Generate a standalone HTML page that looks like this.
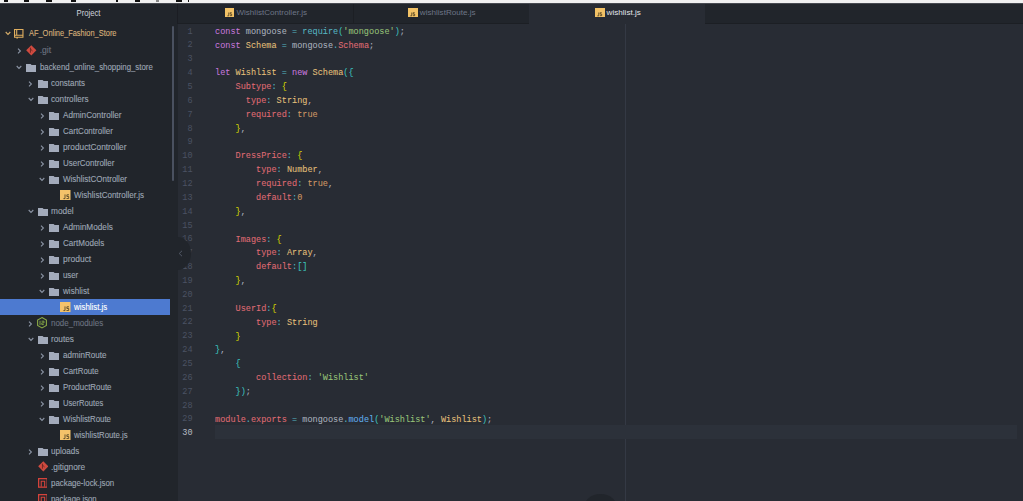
<!DOCTYPE html>
<html><head><meta charset="utf-8"><style>
*{margin:0;padding:0;box-sizing:border-box}
html,body{width:1023px;height:501px;overflow:hidden;background:#21252b}
body{position:relative;font-family:"Liberation Sans",sans-serif}
#strip{position:absolute;left:0;top:0;width:1023px;height:3px;background:#f0f0f0}
.mk{position:absolute;top:0;height:1.6px;background:#111}
#tree{position:absolute;left:0;top:3px;width:177px;height:498px;background:#21252b;overflow:hidden}
#treeinner{position:absolute;left:0;top:-3px;width:177px;height:501px}
.ic{position:absolute;display:block}
.t{position:absolute;white-space:nowrap;font-size:8.6px;line-height:13px;color:#9da5b4;-webkit-text-stroke:0.12px;transform:scaleX(0.93);transform-origin:0 50%}
.t.root{color:#d8b07a;transform:scaleX(0.86)}
.t.dim{color:#6b7280}
.t.selt{color:#ffffff}
.sel{position:absolute;left:0;width:170px;height:16px;background:#4d7ad0}
#proj{position:absolute;left:0;top:9.0px;width:177px;text-align:center;font-size:8.2px;line-height:9px;color:#d0d4db;transform:scaleX(0.94)}
#tscroll{position:absolute;left:172px;top:26px;width:2.2px;height:155px;background:#4a5160;border-radius:1px}
#tabs{position:absolute;left:177px;top:3px;width:846px;height:20.5px;background:#21252b;border-bottom:1px solid #1c1f24}
.tab{position:absolute;top:0;height:20.5px;width:176px;padding-left:2px;text-align:center;font-size:8.1px;line-height:20px;color:#6e7687}
.tab.act{background:#282c34;color:#e2e5ea;height:21px}
.tab .js{display:inline-block;width:9.4px;height:9px;background:#f2c266;vertical-align:-1.5px;margin-right:2px;position:relative}
.tab .js svg{position:absolute;left:0;top:0}
.sep{position:absolute;top:0;width:1px;height:20.5px;background:#1c1f24}
#editor{position:absolute;left:178px;top:23.5px;width:845px;height:477.5px;background:#282c34;overflow:hidden}
.ln{position:absolute;left:0;width:15.5px;text-align:right;font-family:"Liberation Mono",monospace;font-size:9.8px;line-height:13.83px;color:#4b5263;transform:scaleX(0.87);transform-origin:100% 50%}
.ln.cur{color:#b9bdc5}
#cursorline{position:absolute;left:37.2px;width:801.5px;height:13.83px;background:#2c313a}
#code{position:absolute;left:0;top:0}
.cl{position:absolute;left:38.0px;white-space:pre;font-family:"Liberation Mono",monospace;font-size:9.9px;line-height:13.83px;transform:scaleX(0.866);transform-origin:0 50%;-webkit-text-stroke:0.05px}
#wrap{position:absolute;left:447px;top:0;width:1px;height:478px;background:#343944}
#rstrip{position:absolute;left:840.5px;top:0;width:5.5px;height:478px;background:#262a31}
#dock{position:absolute;left:584px;top:494px;width:32.5px;height:27px;border-radius:50%;background:#21252b}
#ldock{position:absolute;left:177px;top:237px;width:13.5px;height:32.5px;border-radius:0 100% 100% 0/0 50% 50% 0;background:#21252b}
</style></head><body>
<div id="strip"><div class="mk" style="left:3.8px;width:4.500000000000001px"></div><div class="mk" style="left:24px;width:5px"></div><div class="mk" style="left:46px;width:5.5px"></div><div class="mk" style="left:71px;width:5px"></div><div class="mk" style="left:116px;width:2px"></div><div class="mk" style="left:135px;width:5px"></div><div class="mk" style="left:176px;width:6px"></div><div class="mk" style="left:188px;width:1px"></div><div class="mk" style="left:156px;width:2.5px;background:#888"></div></div>
<div style="position:absolute;left:0;top:3px;width:1023px;height:1px;background:#474a51;z-index:5"></div>
<div id="tree"><div id="treeinner">
<div id="proj">Project</div>
<svg class="ic" style="left:4.5px;top:31.2px" width="6" height="5" viewBox="0 0 6 5"><polyline points="0.7,1 3,3.4 5.3,1" fill="none" stroke="#d6ad6a" stroke-width="1.1"/></svg><svg class="ic" style="left:14px;top:28.5px" width="9.5" height="10" viewBox="0 0 9.5 10"><path d="M0.55,0.55 H8.95 V8.2 H0.55 Z M2.7,0.55 V6.2 M0.55,6.2 H8.95" fill="none" stroke="#dfae5f" stroke-width="1.1"/><path d="M2.4,8.2 V9.8 L3.2,9.2 L4,9.8 V8.2 Z" fill="#dfae5f"/></svg><div class="t root" style="left:29px;top:27.1px;transform:scaleX(0.864)">AF_Online_Fashion_Store</div><svg class="ic" style="left:16.8px;top:47.7px" width="5" height="6" viewBox="0 0 5 6"><polyline points="1,0.7 3.4,3 1,5.3" fill="none" stroke="#8b94a4" stroke-width="1.1"/></svg><svg class="ic" style="left:26.1px;top:45.4px" width="10.6" height="10.6" viewBox="0 0 11 11"><path d="M5.5,0.2 L10.8,5.5 L5.5,10.8 L0.2,5.5 Z" fill="#cf4a3f"/><path d="M4.6,2.8 V8 M4.6,4.2 L6.8,6.2" stroke="#5a1f1b" stroke-width="0.8" fill="none"/></svg><div class="t dim" style="left:39.7px;top:44.2px;transform:scaleX(1.0)">.git</div><svg class="ic" style="left:16.2px;top:64.9px" width="6" height="5" viewBox="0 0 6 5"><polyline points="0.7,1 3,3.4 5.3,1" fill="none" stroke="#8b94a4" stroke-width="1.1"/></svg><svg class="ic" style="left:26.3px;top:63.5px" width="10" height="8" viewBox="0 0 10 8"><path d="M0,0 H4.6 L5.6,1 H10 V8 H0 Z" fill="#a3abbb"/></svg><div class="t" style="left:39.7px;top:61.0px;transform:scaleX(0.911)">backend_online_shopping_store</div><svg class="ic" style="left:28.3px;top:80.5px" width="5" height="6" viewBox="0 0 5 6"><polyline points="1,0.7 3.4,3 1,5.3" fill="none" stroke="#8b94a4" stroke-width="1.1"/></svg><svg class="ic" style="left:37.8px;top:79.5px" width="10" height="8" viewBox="0 0 10 8"><path d="M0,0 H4.6 L5.6,1 H10 V8 H0 Z" fill="#a3abbb"/></svg><div class="t" style="left:51.2px;top:77.0px;transform:scaleX(0.924)">constants</div><svg class="ic" style="left:27.7px;top:96.9px" width="6" height="5" viewBox="0 0 6 5"><polyline points="0.7,1 3,3.4 5.3,1" fill="none" stroke="#8b94a4" stroke-width="1.1"/></svg><svg class="ic" style="left:37.8px;top:95.5px" width="10" height="8" viewBox="0 0 10 8"><path d="M0,0 H4.6 L5.6,1 H10 V8 H0 Z" fill="#a3abbb"/></svg><div class="t" style="left:51.2px;top:93.0px;transform:scaleX(0.948)">controllers</div><svg class="ic" style="left:39.8px;top:112.5px" width="5" height="6" viewBox="0 0 5 6"><polyline points="1,0.7 3.4,3 1,5.3" fill="none" stroke="#8b94a4" stroke-width="1.1"/></svg><svg class="ic" style="left:49.3px;top:111.5px" width="10" height="8" viewBox="0 0 10 8"><path d="M0,0 H4.6 L5.6,1 H10 V8 H0 Z" fill="#a3abbb"/></svg><div class="t" style="left:62.7px;top:109.0px;transform:scaleX(0.951)">AdminController</div><svg class="ic" style="left:39.8px;top:128.5px" width="5" height="6" viewBox="0 0 5 6"><polyline points="1,0.7 3.4,3 1,5.3" fill="none" stroke="#8b94a4" stroke-width="1.1"/></svg><svg class="ic" style="left:49.3px;top:127.5px" width="10" height="8" viewBox="0 0 10 8"><path d="M0,0 H4.6 L5.6,1 H10 V8 H0 Z" fill="#a3abbb"/></svg><div class="t" style="left:62.7px;top:125.0px;transform:scaleX(0.931)">CartController</div><svg class="ic" style="left:39.8px;top:144.5px" width="5" height="6" viewBox="0 0 5 6"><polyline points="1,0.7 3.4,3 1,5.3" fill="none" stroke="#8b94a4" stroke-width="1.1"/></svg><svg class="ic" style="left:49.3px;top:143.5px" width="10" height="8" viewBox="0 0 10 8"><path d="M0,0 H4.6 L5.6,1 H10 V8 H0 Z" fill="#a3abbb"/></svg><div class="t" style="left:62.7px;top:141.0px;transform:scaleX(0.962)">productController</div><svg class="ic" style="left:39.8px;top:160.5px" width="5" height="6" viewBox="0 0 5 6"><polyline points="1,0.7 3.4,3 1,5.3" fill="none" stroke="#8b94a4" stroke-width="1.1"/></svg><svg class="ic" style="left:49.3px;top:159.5px" width="10" height="8" viewBox="0 0 10 8"><path d="M0,0 H4.6 L5.6,1 H10 V8 H0 Z" fill="#a3abbb"/></svg><div class="t" style="left:62.7px;top:157.0px;transform:scaleX(0.929)">UserController</div><svg class="ic" style="left:39.2px;top:176.9px" width="6" height="5" viewBox="0 0 6 5"><polyline points="0.7,1 3,3.4 5.3,1" fill="none" stroke="#8b94a4" stroke-width="1.1"/></svg><svg class="ic" style="left:49.3px;top:175.5px" width="10" height="8" viewBox="0 0 10 8"><path d="M0,0 H4.6 L5.6,1 H10 V8 H0 Z" fill="#a3abbb"/></svg><div class="t" style="left:62.7px;top:173.0px;transform:scaleX(0.931)">WishlistCOntroller</div><svg class="ic" style="left:60.4px;top:189.6px" width="10.5" height="10" viewBox="0 0 10.5 10"><rect width="10.5" height="10" fill="#f4c26a"/><path d="M3.4,8.6 H5 V4.4 M9,4.8 H6.9 V6.5 H8.7 V8.5 H6.5" fill="none" stroke="#4a3d22" stroke-width="0.8"/></svg><div class="t" style="left:74.2px;top:189.0px;transform:scaleX(0.934)">WishlistController.js</div><svg class="ic" style="left:27.7px;top:208.9px" width="6" height="5" viewBox="0 0 6 5"><polyline points="0.7,1 3,3.4 5.3,1" fill="none" stroke="#8b94a4" stroke-width="1.1"/></svg><svg class="ic" style="left:37.8px;top:207.5px" width="10" height="8" viewBox="0 0 10 8"><path d="M0,0 H4.6 L5.6,1 H10 V8 H0 Z" fill="#a3abbb"/></svg><div class="t" style="left:51.2px;top:205.0px;transform:scaleX(0.966)">model</div><svg class="ic" style="left:39.8px;top:224.5px" width="5" height="6" viewBox="0 0 5 6"><polyline points="1,0.7 3.4,3 1,5.3" fill="none" stroke="#8b94a4" stroke-width="1.1"/></svg><svg class="ic" style="left:49.3px;top:223.5px" width="10" height="8" viewBox="0 0 10 8"><path d="M0,0 H4.6 L5.6,1 H10 V8 H0 Z" fill="#a3abbb"/></svg><div class="t" style="left:62.7px;top:221.0px;transform:scaleX(0.957)">AdminModels</div><svg class="ic" style="left:39.8px;top:240.5px" width="5" height="6" viewBox="0 0 5 6"><polyline points="1,0.7 3.4,3 1,5.3" fill="none" stroke="#8b94a4" stroke-width="1.1"/></svg><svg class="ic" style="left:49.3px;top:239.5px" width="10" height="8" viewBox="0 0 10 8"><path d="M0,0 H4.6 L5.6,1 H10 V8 H0 Z" fill="#a3abbb"/></svg><div class="t" style="left:62.7px;top:237.0px;transform:scaleX(0.937)">CartModels</div><svg class="ic" style="left:39.8px;top:256.5px" width="5" height="6" viewBox="0 0 5 6"><polyline points="1,0.7 3.4,3 1,5.3" fill="none" stroke="#8b94a4" stroke-width="1.1"/></svg><svg class="ic" style="left:49.3px;top:255.5px" width="10" height="8" viewBox="0 0 10 8"><path d="M0,0 H4.6 L5.6,1 H10 V8 H0 Z" fill="#a3abbb"/></svg><div class="t" style="left:62.7px;top:253.0px;transform:scaleX(0.984)">product</div><svg class="ic" style="left:39.8px;top:272.5px" width="5" height="6" viewBox="0 0 5 6"><polyline points="1,0.7 3.4,3 1,5.3" fill="none" stroke="#8b94a4" stroke-width="1.1"/></svg><svg class="ic" style="left:49.3px;top:271.5px" width="10" height="8" viewBox="0 0 10 8"><path d="M0,0 H4.6 L5.6,1 H10 V8 H0 Z" fill="#a3abbb"/></svg><div class="t" style="left:62.7px;top:269.0px;transform:scaleX(0.909)">user</div><svg class="ic" style="left:39.2px;top:288.9px" width="6" height="5" viewBox="0 0 6 5"><polyline points="0.7,1 3,3.4 5.3,1" fill="none" stroke="#8b94a4" stroke-width="1.1"/></svg><svg class="ic" style="left:49.3px;top:287.5px" width="10" height="8" viewBox="0 0 10 8"><path d="M0,0 H4.6 L5.6,1 H10 V8 H0 Z" fill="#a3abbb"/></svg><div class="t" style="left:62.7px;top:285.0px;transform:scaleX(0.946)">wishlist</div><div class="sel" style="top:299.0px"></div><svg class="ic" style="left:60.4px;top:301.6px" width="10.5" height="10" viewBox="0 0 10.5 10"><rect width="10.5" height="10" fill="#f4c26a"/><path d="M3.4,8.6 H5 V4.4 M9,4.8 H6.9 V6.5 H8.7 V8.5 H6.5" fill="none" stroke="#4a3d22" stroke-width="0.8"/></svg><div class="t selt" style="left:74.2px;top:301.0px;transform:scaleX(0.917)">wishlist.js</div><svg class="ic" style="left:28.3px;top:320.5px" width="5" height="6" viewBox="0 0 5 6"><polyline points="1,0.7 3.4,3 1,5.3" fill="none" stroke="#8b94a4" stroke-width="1.1"/></svg><svg class="ic" style="left:37.4px;top:317.2px" width="10" height="11.5" viewBox="0 0 10 11.5"><path d="M5,0.6 L9.4,3.1 V8.4 L5,10.9 L0.6,8.4 V3.1 Z" fill="none" stroke="#89a845" stroke-width="1.1"/><path d="M3,3.8 V8 M4.6,4.2 H7 V5.9 H4.8 V7.6 H6.8" fill="none" stroke="#7f9f45" stroke-width="1"/></svg><div class="t dim" style="left:51.2px;top:317.0px;transform:scaleX(0.926)">node_modules</div><svg class="ic" style="left:27.7px;top:336.9px" width="6" height="5" viewBox="0 0 6 5"><polyline points="0.7,1 3,3.4 5.3,1" fill="none" stroke="#8b94a4" stroke-width="1.1"/></svg><svg class="ic" style="left:37.8px;top:335.5px" width="10" height="8" viewBox="0 0 10 8"><path d="M0,0 H4.6 L5.6,1 H10 V8 H0 Z" fill="#a3abbb"/></svg><div class="t" style="left:51.2px;top:333.0px;transform:scaleX(0.959)">routes</div><svg class="ic" style="left:39.8px;top:352.5px" width="5" height="6" viewBox="0 0 5 6"><polyline points="1,0.7 3.4,3 1,5.3" fill="none" stroke="#8b94a4" stroke-width="1.1"/></svg><svg class="ic" style="left:49.3px;top:351.5px" width="10" height="8" viewBox="0 0 10 8"><path d="M0,0 H4.6 L5.6,1 H10 V8 H0 Z" fill="#a3abbb"/></svg><div class="t" style="left:62.7px;top:349.0px;transform:scaleX(0.936)">adminRoute</div><svg class="ic" style="left:39.8px;top:368.5px" width="5" height="6" viewBox="0 0 5 6"><polyline points="1,0.7 3.4,3 1,5.3" fill="none" stroke="#8b94a4" stroke-width="1.1"/></svg><svg class="ic" style="left:49.3px;top:367.5px" width="10" height="8" viewBox="0 0 10 8"><path d="M0,0 H4.6 L5.6,1 H10 V8 H0 Z" fill="#a3abbb"/></svg><div class="t" style="left:62.7px;top:365.0px;transform:scaleX(0.909)">CartRoute</div><svg class="ic" style="left:39.8px;top:384.5px" width="5" height="6" viewBox="0 0 5 6"><polyline points="1,0.7 3.4,3 1,5.3" fill="none" stroke="#8b94a4" stroke-width="1.1"/></svg><svg class="ic" style="left:49.3px;top:383.5px" width="10" height="8" viewBox="0 0 10 8"><path d="M0,0 H4.6 L5.6,1 H10 V8 H0 Z" fill="#a3abbb"/></svg><div class="t" style="left:62.7px;top:381.0px;transform:scaleX(0.923)">ProductRoute</div><svg class="ic" style="left:39.8px;top:400.5px" width="5" height="6" viewBox="0 0 5 6"><polyline points="1,0.7 3.4,3 1,5.3" fill="none" stroke="#8b94a4" stroke-width="1.1"/></svg><svg class="ic" style="left:49.3px;top:399.5px" width="10" height="8" viewBox="0 0 10 8"><path d="M0,0 H4.6 L5.6,1 H10 V8 H0 Z" fill="#a3abbb"/></svg><div class="t" style="left:62.7px;top:397.0px;transform:scaleX(0.886)">UserRoutes</div><svg class="ic" style="left:39.2px;top:416.9px" width="6" height="5" viewBox="0 0 6 5"><polyline points="0.7,1 3,3.4 5.3,1" fill="none" stroke="#8b94a4" stroke-width="1.1"/></svg><svg class="ic" style="left:49.3px;top:415.5px" width="10" height="8" viewBox="0 0 10 8"><path d="M0,0 H4.6 L5.6,1 H10 V8 H0 Z" fill="#a3abbb"/></svg><div class="t" style="left:62.7px;top:413.0px;transform:scaleX(0.913)">WishlistRoute</div><svg class="ic" style="left:60.4px;top:429.6px" width="10.5" height="10" viewBox="0 0 10.5 10"><rect width="10.5" height="10" fill="#f4c26a"/><path d="M3.4,8.6 H5 V4.4 M9,4.8 H6.9 V6.5 H8.7 V8.5 H6.5" fill="none" stroke="#4a3d22" stroke-width="0.8"/></svg><div class="t" style="left:74.2px;top:429.0px;transform:scaleX(0.905)">wishlistRoute.js</div><svg class="ic" style="left:28.3px;top:448.5px" width="5" height="6" viewBox="0 0 5 6"><polyline points="1,0.7 3.4,3 1,5.3" fill="none" stroke="#8b94a4" stroke-width="1.1"/></svg><svg class="ic" style="left:37.8px;top:447.5px" width="10" height="8" viewBox="0 0 10 8"><path d="M0,0 H4.6 L5.6,1 H10 V8 H0 Z" fill="#a3abbb"/></svg><div class="t" style="left:51.2px;top:445.0px;transform:scaleX(0.94)">uploads</div><svg class="ic" style="left:37.6px;top:461.3px" width="10.6" height="10.6" viewBox="0 0 11 11"><path d="M5.5,0.2 L10.8,5.5 L5.5,10.8 L0.2,5.5 Z" fill="#cf4a3f"/><path d="M4.6,2.8 V8 M4.6,4.2 L6.8,6.2" stroke="#5a1f1b" stroke-width="0.8" fill="none"/></svg><div class="t" style="left:51.2px;top:461.0px;transform:scaleX(0.967)">.gitignore</div><svg class="ic" style="left:37.5px;top:477.9px" width="9.8" height="9.8" viewBox="0 0 10 10"><rect x="0.65" y="0.65" width="8.7" height="8.7" fill="none" stroke="#d4433b" stroke-width="1.3"/><path d="M3.3,9 V3.3 H6.8 V9" fill="none" stroke="#d4433b" stroke-width="1.1"/></svg><div class="t" style="left:51.2px;top:477.0px;transform:scaleX(0.919)">package-lock.json</div><svg class="ic" style="left:37.5px;top:493.9px" width="9.8" height="9.8" viewBox="0 0 10 10"><rect x="0.65" y="0.65" width="8.7" height="8.7" fill="none" stroke="#d4433b" stroke-width="1.3"/><path d="M3.3,9 V3.3 H6.8 V9" fill="none" stroke="#d4433b" stroke-width="1.1"/></svg><div class="t" style="left:51.2px;top:493.0px;transform:scaleX(0.902)">package.json</div>
<div id="tscroll"></div>
</div></div>
<div id="tabs">
<div style="position:absolute;left:0;top:0;width:1px;height:21px;background:#1b1d23"></div><div class="tab" style="left:0"><span class="js"><svg width="9.4" height="9" viewBox="0 0 10 10"><path d="M2.4,8.7 H4 V5 M7.2,5.2 H5.6 V6.8 H7.2 V8.5 H5.4" fill="none" stroke="#4a3b1c" stroke-width="0.9"/></svg></span>WishlistController.js</div>
<div class="sep" style="left:176px"></div>
<div class="tab" style="left:176px"><span class="js"><svg width="9.4" height="9" viewBox="0 0 10 10"><path d="M2.4,8.7 H4 V5 M7.2,5.2 H5.6 V6.8 H7.2 V8.5 H5.4" fill="none" stroke="#4a3b1c" stroke-width="0.9"/></svg></span>wishlistRoute.js</div>
<div class="tab act" style="left:352px"><span class="js"><svg width="9.4" height="9" viewBox="0 0 10 10"><path d="M2.4,8.7 H4 V5 M7.2,5.2 H5.6 V6.8 H7.2 V8.5 H5.4" fill="none" stroke="#4a3b1c" stroke-width="0.9"/></svg></span>wishlist.js</div>
</div>
<div id="editor" style="top:23.5px">
<div id="wrap"></div>

<div id="cursorline" style="top:401.3px"></div>
</div>
<div id="gutter" style="position:absolute;left:177px;top:0;width:30px;height:501px">
<div class="ln" style="top:24.60px">1</div><div class="ln" style="top:38.45px">2</div><div class="ln" style="top:52.30px">3</div><div class="ln" style="top:66.15px">4</div><div class="ln" style="top:80.00px">5</div><div class="ln" style="top:93.85px">6</div><div class="ln" style="top:107.70px">7</div><div class="ln" style="top:121.55px">8</div><div class="ln" style="top:135.40px">9</div><div class="ln" style="top:149.25px">10</div><div class="ln" style="top:163.10px">11</div><div class="ln" style="top:176.95px">12</div><div class="ln" style="top:190.80px">13</div><div class="ln" style="top:204.65px">14</div><div class="ln" style="top:218.50px">15</div><div class="ln" style="top:232.35px">16</div><div class="ln" style="top:246.20px">17</div><div class="ln" style="top:260.05px">18</div><div class="ln" style="top:273.90px">19</div><div class="ln" style="top:287.75px">20</div><div class="ln" style="top:301.60px">21</div><div class="ln" style="top:315.45px">22</div><div class="ln" style="top:329.30px">23</div><div class="ln" style="top:343.15px">24</div><div class="ln" style="top:357.00px">25</div><div class="ln" style="top:370.85px">26</div><div class="ln" style="top:384.70px">27</div><div class="ln" style="top:398.55px">28</div><div class="ln" style="top:412.40px">29</div><div class="ln cur" style="top:426.25px">30</div>
</div>
<div style="position:absolute;left:177px;top:0"><div class="cl" style="top:24.80px"><span style="color:#c678dd">const</span><span style="color:#abb2bf"> mongoose </span><span style="color:#56b6c2">=</span><span style="color:#abb2bf"> </span><span style="color:#56b6c2">require</span><span style="color:#3cc4c0">(</span><span style="color:#98c379">&#x27;mongoose&#x27;</span><span style="color:#3cc4c0">)</span><span style="color:#abb2bf">;</span></div><div class="cl" style="top:38.65px"><span style="color:#c678dd">const</span><span style="color:#abb2bf"> </span><span style="color:#e5c07b">Schema</span><span style="color:#abb2bf"> </span><span style="color:#56b6c2">=</span><span style="color:#abb2bf"> mongoose</span><span style="color:#56b6c2">.</span><span style="color:#e06c75">Schema</span><span style="color:#abb2bf">;</span></div><div class="cl" style="top:66.35px"><span style="color:#c678dd">let</span><span style="color:#abb2bf"> </span><span style="color:#e5c07b">Wishlist</span><span style="color:#abb2bf"> </span><span style="color:#56b6c2">=</span><span style="color:#abb2bf"> </span><span style="color:#c678dd">new</span><span style="color:#abb2bf"> </span><span style="color:#e5c07b">Schema</span><span style="color:#3cc4c0">({</span></div><div class="cl" style="top:80.20px"><span style="color:#abb2bf">    </span><span style="color:#e06c75">Subtype</span><span style="color:#56b6c2">:</span><span style="color:#abb2bf"> </span><span style="color:#d7d700">{</span></div><div class="cl" style="top:94.05px"><span style="color:#abb2bf">      </span><span style="color:#e06c75">type</span><span style="color:#56b6c2">:</span><span style="color:#abb2bf"> </span><span style="color:#e5c07b">String</span><span style="color:#abb2bf">,</span></div><div class="cl" style="top:107.90px"><span style="color:#abb2bf">      </span><span style="color:#e06c75">required</span><span style="color:#56b6c2">:</span><span style="color:#abb2bf"> </span><span style="color:#d19a66">true</span></div><div class="cl" style="top:121.75px"><span style="color:#abb2bf">    </span><span style="color:#d7d700">}</span><span style="color:#abb2bf">,</span></div><div class="cl" style="top:149.45px"><span style="color:#abb2bf">    </span><span style="color:#e06c75">DressPrice</span><span style="color:#56b6c2">:</span><span style="color:#abb2bf"> </span><span style="color:#d7d700">{</span></div><div class="cl" style="top:163.30px"><span style="color:#abb2bf">        </span><span style="color:#e06c75">type</span><span style="color:#56b6c2">:</span><span style="color:#abb2bf"> </span><span style="color:#e5c07b">Number</span><span style="color:#abb2bf">,</span></div><div class="cl" style="top:177.15px"><span style="color:#abb2bf">        </span><span style="color:#e06c75">required</span><span style="color:#56b6c2">:</span><span style="color:#abb2bf"> </span><span style="color:#d19a66">true</span><span style="color:#abb2bf">,</span></div><div class="cl" style="top:191.00px"><span style="color:#abb2bf">        </span><span style="color:#e06c75">default</span><span style="color:#56b6c2">:</span><span style="color:#d19a66">0</span></div><div class="cl" style="top:204.85px"><span style="color:#abb2bf">    </span><span style="color:#d7d700">}</span><span style="color:#abb2bf">,</span></div><div class="cl" style="top:232.55px"><span style="color:#abb2bf">    </span><span style="color:#e06c75">Images</span><span style="color:#56b6c2">:</span><span style="color:#abb2bf"> </span><span style="color:#d7d700">{</span></div><div class="cl" style="top:246.40px"><span style="color:#abb2bf">        </span><span style="color:#e06c75">type</span><span style="color:#56b6c2">:</span><span style="color:#abb2bf"> </span><span style="color:#e5c07b">Array</span><span style="color:#abb2bf">,</span></div><div class="cl" style="top:260.25px"><span style="color:#abb2bf">        </span><span style="color:#e06c75">default</span><span style="color:#56b6c2">:</span><span style="color:#3cc4c0">[]</span></div><div class="cl" style="top:274.10px"><span style="color:#abb2bf">    </span><span style="color:#d7d700">}</span><span style="color:#abb2bf">,</span></div><div class="cl" style="top:301.80px"><span style="color:#abb2bf">    </span><span style="color:#e06c75">UserId</span><span style="color:#56b6c2">:</span><span style="color:#d7d700">{</span></div><div class="cl" style="top:315.65px"><span style="color:#abb2bf">        </span><span style="color:#e06c75">type</span><span style="color:#56b6c2">:</span><span style="color:#abb2bf"> </span><span style="color:#e5c07b">String</span></div><div class="cl" style="top:329.50px"><span style="color:#abb2bf">    </span><span style="color:#d7d700">}</span></div><div class="cl" style="top:343.35px"><span style="color:#3cc4c0">}</span><span style="color:#abb2bf">,</span></div><div class="cl" style="top:357.20px"><span style="color:#abb2bf">    </span><span style="color:#3cc4c0">{</span></div><div class="cl" style="top:371.05px"><span style="color:#abb2bf">        </span><span style="color:#e06c75">collection</span><span style="color:#56b6c2">:</span><span style="color:#abb2bf"> </span><span style="color:#98c379">&#x27;Wishlist&#x27;</span></div><div class="cl" style="top:384.90px"><span style="color:#abb2bf">    </span><span style="color:#3cc4c0">})</span><span style="color:#abb2bf">;</span></div><div class="cl" style="top:412.60px"><span style="color:#e06c75">module</span><span style="color:#56b6c2">.</span><span style="color:#e06c75">exports</span><span style="color:#abb2bf"> </span><span style="color:#56b6c2">=</span><span style="color:#abb2bf"> mongoose</span><span style="color:#56b6c2">.</span><span style="color:#61afef">model</span><span style="color:#3cc4c0">(</span><span style="color:#98c379">&#x27;Wishlist&#x27;</span><span style="color:#abb2bf">, </span><span style="color:#e5c07b">Wishlist</span><span style="color:#3cc4c0">)</span><span style="color:#abb2bf">;</span></div></div>
<div id="dock"></div>
<div id="ldock"><svg style="position:absolute;left:1px;top:13px" width="5" height="7" viewBox="0 0 5 7"><polyline points="4,0.8 1.2,3.5 4,6.2" fill="none" stroke="#525967" stroke-width="1"/></svg></div>
</body></html>
